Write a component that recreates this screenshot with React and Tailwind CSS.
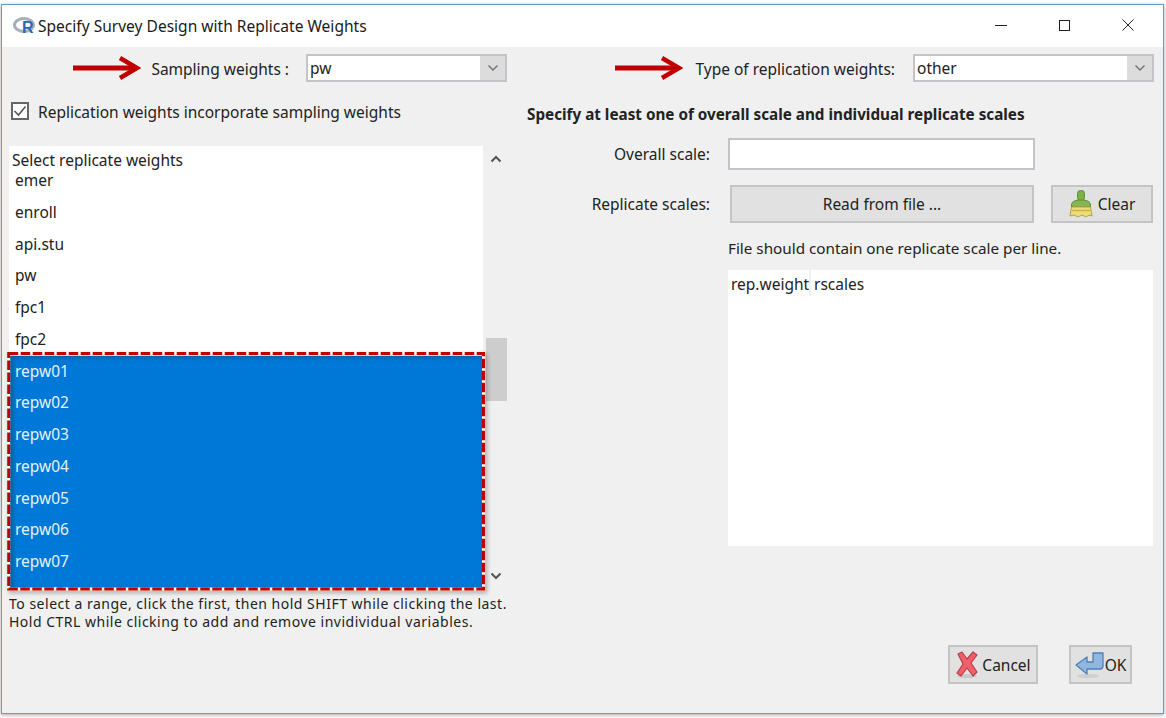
const FONT = "font-['Noto_Sans',sans-serif]";

const variables = ["emer", "enroll", "api.stu", "pw", "fpc1", "fpc2"];
const selected = ["repw01", "repw02", "repw03", "repw04", "repw05", "repw06", "repw07", "repw08"];

function RedArrow({ width }) {
  return (
    <svg width={width} height="24" viewBox={`0 0 ${width} 24`} className="shrink-0">
      <path d={`M0 12H${width - 6}`} stroke="#c00000" strokeWidth="5" />
      <path d={`M${width - 21} 2L${width - 4} 12L${width - 21} 22`} stroke="#c00000" strokeWidth="4.5" fill="none" />
    </svg>
  );
}

function Chevron({ up, thin, className }) {
  return (
    <svg width="12" height="8" viewBox="0 0 12 8" className={className}>
      <path
        d={up ? "M1.5 6.5L6 2L10.5 6.5" : "M1.5 1.5L6 6L10.5 1.5"}
        stroke={thin ? "#707070" : "#555"}
        strokeWidth={thin ? "1.4" : "2"}
        fill="none"
      />
    </svg>
  );
}

function ComboBox({ value, width }) {
  return (
    <div className={`flex h-[28px] shrink-0 border-2 border-[#c4c4c8] bg-white ${width}`}>
      <div className="flex-1 pl-[2px] leading-[24px] text-[#222]">{value}</div>
      <div className="flex w-[25px] items-center justify-center bg-[#dcdcdc]">
        <Chevron thin />
      </div>
    </div>
  );
}

function RLogo() {
  return (
    <svg width="24" height="20" viewBox="0 0 24 20" className="shrink-0">
      <ellipse cx="11" cy="9" rx="9.5" ry="6.5" fill="none" stroke="#aab0b8" strokeWidth="3" />
      <text x="9" y="16.5" fontSize="16" fontWeight="700" fill="#2a66b8" fontFamily="Liberation Sans, sans-serif">R</text>
    </svg>
  );
}

function BrushIcon() {
  return (
    <svg width="24" height="28" viewBox="0 0 24 28" className="shrink-0">
      <rect x="8.5" y="0.5" width="7" height="10" rx="3" fill="#7fb04a" stroke="#5d8c33" />
      <path d="M2.5 15C2.5 11 7 10 12 10S21.5 11 21.5 15V17H2.5Z" fill="#86b553" stroke="#5d8c33" />
      <path d="M2.5 17H21.5L23 26L20 25L17 27L13 25L9 27L5 25L1 26Z" fill="#eedd7c" stroke="#b9a23e" strokeLinejoin="round" />
      <path d="M3 20.5H21.5" stroke="#c9b24a" strokeWidth="1.5" />
    </svg>
  );
}

function CancelIcon() {
  return (
    <svg width="24" height="28" viewBox="0 0 24 28" className="shrink-0">
      <ellipse cx="12" cy="25" rx="10" ry="2" fill="#c9c9c9" />
      <path
        d="M3 3L7 1L12 8L18 1L22 4L16 12L22 21L18 25L12 17L6 25L2 22L8 13Z"
        fill="#f0606a"
        stroke="#b8404a"
        strokeWidth="1.2"
        strokeLinejoin="round"
      />
    </svg>
  );
}

function ReturnIcon() {
  return (
    <svg width="30" height="28" viewBox="0 0 30 28" className="shrink-0">
      <ellipse cx="13" cy="25" rx="11" ry="2" fill="#cfcfcf" />
      <path
        d="M18 2H28V15C28 17 27 18 25 18H12V23L1 14L12 6V11H18Z"
        fill="#8fb7e0"
        stroke="#4f7fb5"
        strokeWidth="1.3"
        strokeLinejoin="round"
      />
    </svg>
  );
}

function Button({ className, children }) {
  return (
    <div className={`flex items-center justify-center border-2 border-[#c4c4c4] bg-[#e1e1e1] text-[#222] ${className}`}>
      {children}
    </div>
  );
}

export default function App() {
  return (
    <div className={`h-[718px] w-[1166px] overflow-hidden bg-white pl-px pt-[4px] ${FONT}`}>
      <div className="flex h-[710px] w-[1163px] flex-col border border-[#5a9fd6] shadow-[0_1px_4px_rgba(0,0,0,0.35)]">
        {/* title bar */}
        <div className="flex h-[42px] shrink-0 items-center bg-white pl-[11px] text-[#1a1a1a]">
          <RLogo />
          <span className="ml-px pt-[2px] text-[15.55px]">Specify Survey Design with Replicate Weights</span>
          <div className="-mt-[2px] ml-auto flex items-center">
            <div className="h-px w-[12px] bg-[#222]" />
            <div className="ml-[52px] h-[11px] w-[11px] border border-[#222]" />
            <svg width="12" height="12" viewBox="0 0 12 12" className="ml-[52px] mr-[29px]">
              <path d="M0.5 0.5L11.5 11.5M11.5 0.5L0.5 11.5" stroke="#222" strokeWidth="1" />
            </svg>
          </div>
        </div>

        <div className="flex flex-1 bg-[#f0f0f0] text-[15.5px] leading-[22px] text-[#222]">
          {/* left column */}
          <div className="w-[525px] shrink-0 pl-[7px] pt-[7px]">
            <div className="flex w-[498px] items-center justify-end">
              <RedArrow width={68} />
              <span className="ml-[10px] mr-[17px] pt-[2px]">Sampling weights :</span>
              <ComboBox value="pw" width="w-[201px]" />
            </div>

            <div className="ml-[2px] mt-[20px] flex h-[18px] items-center">
              <div className="flex h-[18px] w-[18px] items-center justify-center border-2 border-[#666] bg-white">
                <svg width="14" height="12" viewBox="0 0 14 12">
                  <path d="M1.5 6L5.5 10L12.5 1.5" stroke="#555" strokeWidth="1.6" fill="none" />
                </svg>
              </div>
              <span className="ml-[9px] pt-[2px]">Replication weights incorporate sampling weights</span>
            </div>

            <div className="relative mt-[26px] flex h-[443px] w-[498px]">
              <div className="flex w-[474px] flex-col bg-white">
                <div className="h-[26px] shrink-0 pl-[3px] leading-[28px]">Select replicate weights</div>
                <div className="flex-1 overflow-hidden">
                  <div className="-mt-[7px]">
                    {variables.map((name) => (
                      <div key={name} className="h-[31.75px] pl-[6px] leading-[31.75px]">
                        {name}
                      </div>
                    ))}
                    {selected.map((name) => (
                      <div key={name} className="h-[31.75px] bg-[#0078d7] pl-[6px] leading-[31.75px] text-[#e4f1fb]">
                        {name}
                      </div>
                    ))}
                  </div>
                </div>
              </div>

              <div className="flex w-[24px] flex-col items-center pl-[2px]">
                <Chevron up className="mt-[9px]" />
                <div className="mt-[175px] h-[63px] w-[21px] bg-[#cdcdcd]" />
                <Chevron className="mb-[9px] mt-auto" />
              </div>

              {/* red selection marker */}
              <svg width="482" height="242" viewBox="0 0 482 242" className="absolute -left-[2px] top-[205px] drop-shadow-[2px_2px_2px_rgba(0,0,0,0.35)]">
                <rect x="1.7" y="2.5" width="474.8" height="235.5" fill="none" stroke="#ffffff" strokeWidth="3" />
                <rect x="1.7" y="2.5" width="474.8" height="235.5" fill="none" stroke="#c00000" strokeWidth="3" strokeDasharray="9.5 2.5" />
              </svg>
            </div>

            <div className="mt-[6px] text-[14px] leading-[18px] tracking-[0.5px]">
              <div>To select a range, click the first, then hold SHIFT while clicking the last.</div>
              <div>Hold CTRL while clicking to add and remove invidividual variables.</div>
            </div>
          </div>

          {/* right column */}
          <div className="flex-1 pr-[9px] pt-[7px]">
            <div className="flex items-center justify-end">
              <RedArrow width={68} />
              <span className="ml-[12px] mr-[18px] pt-[2px]">Type of replication weights:</span>
              <ComboBox value="other" width="w-[241px]" />
            </div>

            <div className="mt-[20px] text-[15.25px] font-bold leading-[24px]">
              Specify at least one of overall scale and individual replicate scales
            </div>

            <div className="mt-[12px] flex items-center">
              <div className="w-[183px] text-right">Overall scale:</div>
              <div className="ml-[18px] h-[32px] w-[307px] border-2 border-[#c4c4c8] bg-white" />
            </div>

            <div className="mt-[15px] flex items-center">
              <div className="w-[183px] text-right">Replicate scales:</div>
              <Button className="ml-[20px] h-[38px] w-[304px]">Read from file ...</Button>
              <Button className="ml-[17px] h-[38px] w-[102px]">
                <BrushIcon />
                <span className="ml-[5px]">Clear</span>
              </Button>
            </div>

            <div className="ml-[201px] mt-[15px] text-[15.25px] leading-[20px]">File should contain one replicate scale per line.</div>

            <div className="ml-[201px] mt-[12px] h-[276px] w-[425px] bg-white">
              <div className="flex h-[26px] leading-[28px]">
                <div className="w-[83px] border-r-2 border-[#f0f0f0] pl-[3px]">rep.weight</div>
                <div className="pl-[3px]">rscales</div>
              </div>
            </div>

            <div className="mr-[22px] mt-[99px] flex justify-end">
              <Button className="h-[39px] w-[90px]">
                <CancelIcon />
                <span className="ml-[3px]">Cancel</span>
              </Button>
              <Button className="ml-[31px] h-[39px] w-[63px]">
                <ReturnIcon />
                <span>OK</span>
              </Button>
            </div>
          </div>
        </div>
      </div>
    </div>
  );
}
